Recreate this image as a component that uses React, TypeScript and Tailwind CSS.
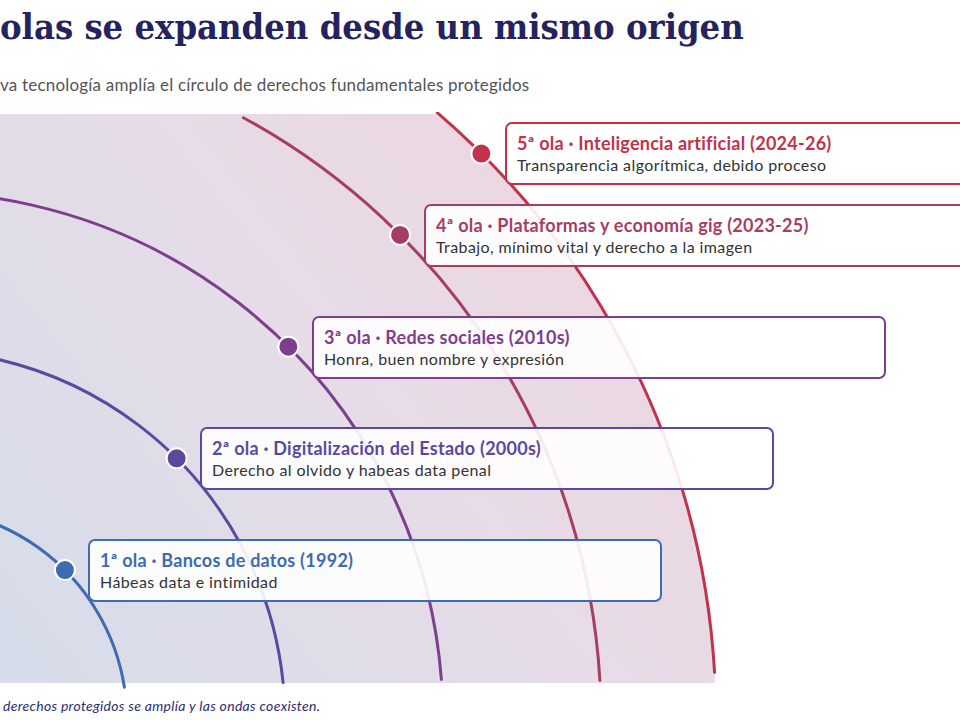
const BODY = { fontFamily: "Lato, 'Noto Sans', sans-serif" };
const CX = -85;
const CY = 720;

type Wave = {
  r: number;
  color: string;
  start: number; // degrees, upper end
  end: number; // degrees, lower end
  title: string;
  text: string;
  left: number;
  top: number;
};

const waves: Wave[] = [
  { r: 212, color: "#3d6cb0", start: 100, end: 8.9, title: "1ª ola · Bancos de datos (1992)", text: "Hábeas data e intimidad", left: 88, top: 539 },
  { r: 370, color: "#5a4a9f", start: 100, end: 5.8, title: "2ª ola · Digitalización del Estado (2000s)", text: "Derecho al olvido y habeas data penal", left: 200, top: 427 },
  { r: 528, color: "#7d3f8c", start: 100, end: 4.4, title: "3ª ola · Redes sociales (2010s)", text: "Honra, buen nombre y expresión", left: 312, top: 316 },
  { r: 686, color: "#a63d64", start: 61.4, end: 3.3, title: "4ª ola · Plataformas y economía gig (2023-25)", text: "Trabajo, mínimo vital y derecho a la imagen", left: 424, top: 204 },
  { r: 801, color: "#c1334b", start: 49.3, end: 3.4, title: "5ª ola · Inteligencia artificial (2024-26)", text: "Transparencia algorítmica, debido proceso", left: 505, top: 122 },
];

const pt = (r: number, deg: number) => {
  const a = (deg * Math.PI) / 180;
  return [CX + r * Math.cos(a), CY - r * Math.sin(a)];
};

const arcPath = (w: Wave) => {
  const [x1, y1] = pt(w.r, w.start);
  const [x2, y2] = pt(w.r, w.end);
  return `M ${x1.toFixed(1)} ${y1.toFixed(1)} A ${w.r} ${w.r} 0 0 1 ${x2.toFixed(1)} ${y2.toFixed(1)}`;
};

function Diagram() {
  const outer = waves[waves.length - 1].r;
  return (
    <div className="relative h-[580px] w-[960px] overflow-hidden">
      <svg className="absolute inset-0" width="960" height="580" viewBox="0 112 960 580">
        <defs>
          <linearGradient id="fillG" gradientUnits="userSpaceOnUse" x1="0" y1="683" x2="715" y2="113">
            <stop offset="0%" stopColor="#d6dcea" />
            <stop offset="50%" stopColor="#e6dce8" />
            <stop offset="100%" stopColor="#eed4dc" />
          </linearGradient>
          <clipPath id="fillClip">
            <rect x="0" y="114" width="960" height="569" />
          </clipPath>
        </defs>
        <circle cx={CX} cy={CY} r={outer} fill="url(#fillG)" clipPath="url(#fillClip)" />
        {waves.map((w) => (
          <path key={w.r} d={arcPath(w)} fill="none" stroke={w.color} strokeWidth="3" strokeLinecap="round" />
        ))}
        {waves.map((w) => {
          const [x, y] = pt(w.r, 45);
          return <circle key={`d${w.r}`} cx={x} cy={y} r="10" fill={w.color} stroke="#ffffff" strokeWidth="2" />;
        })}
      </svg>

      {waves.map((w) => (
        <div
          key={`c${w.r}`}
          className="absolute h-[63px] w-[574px] rounded-[7px] border-2 bg-white/90 pl-[10px] pt-[7px]"
          style={{ left: w.left, top: w.top - 112, borderColor: w.color }}
        >
          <div className="text-[18px] font-bold leading-[24px] tracking-[0.25px]" style={{ color: w.color }}>
            {w.title}
          </div>
          <div className="text-[16px] leading-[20px] tracking-[0.4px] text-[#333333]">{w.text}</div>
        </div>
      ))}
    </div>
  );
}

export default function App() {
  return (
    <div className="h-[720px] w-[960px] overflow-hidden bg-white" style={BODY}>
      <div className="h-[112px] pt-[2px]">
        <h1
          className="whitespace-nowrap text-[36px] font-bold leading-[48px] text-[#25235e] [font-stretch:condensed]"
          style={{ fontFamily: "'DejaVu Serif Condensed', 'DejaVu Serif', serif" }}
        >
          olas se expanden desde un mismo origen
        </h1>
        <p className="mt-[25px] whitespace-nowrap text-[17px] leading-[20px] tracking-[0.2px] text-[#555555]">
          va tecnología amplía el círculo de derechos fundamentales protegidos
        </p>
      </div>
      <Diagram />
      <p className="pl-[3px] pt-[6px] text-[14px] italic leading-[16px] tracking-[0.3px] text-[#2e2c6e]">
        derechos protegidos se amplía y las ondas coexisten.
      </p>
    </div>
  );
}
